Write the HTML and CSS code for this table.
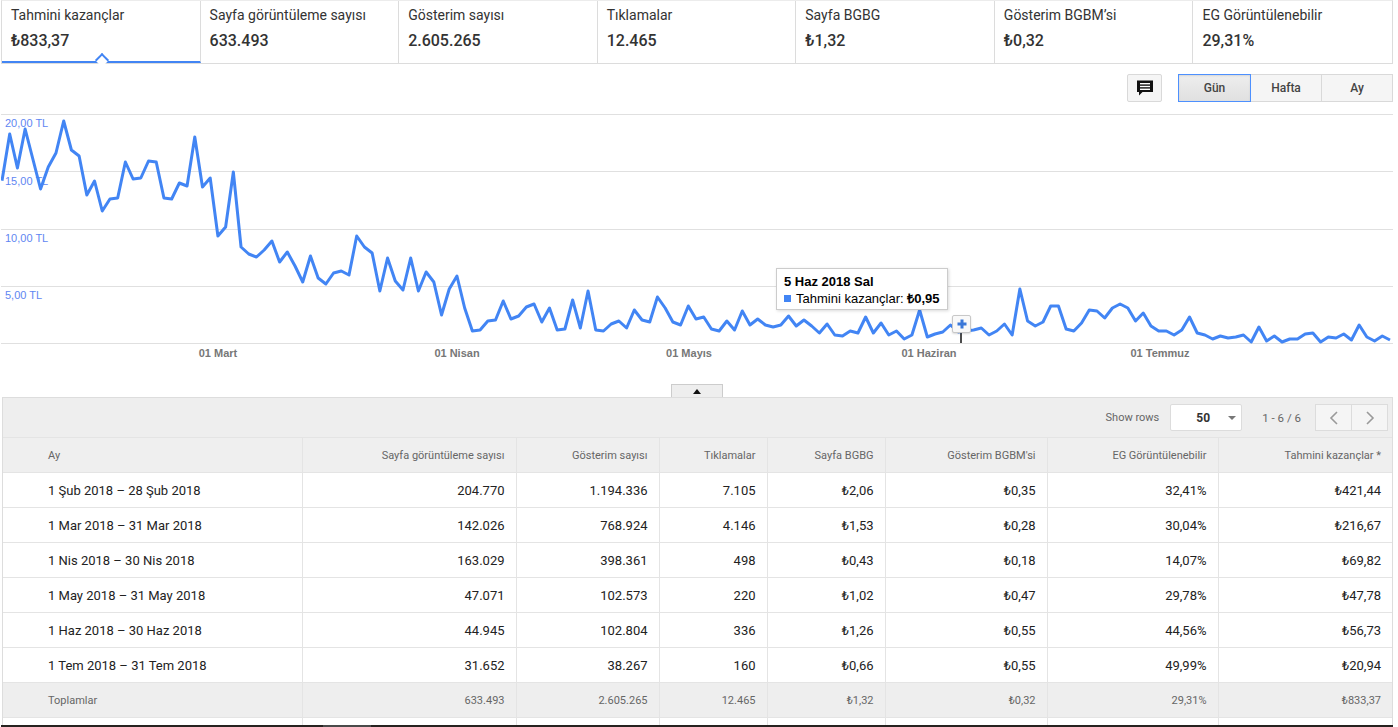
FILE: index.html
```html
<!DOCTYPE html>
<html lang="tr">
<head>
<meta charset="utf-8">
<title>Tahmini kazançlar</title>
<link rel="stylesheet" href="styles.css">
</head>
<body>
<div class="page">
  <div class="metrics">
    <div class="metric active"><div class="m-label">Tahmini kazançlar</div><div class="m-value">₺833,37</div></div>
    <div class="metric"><div class="m-label">Sayfa görüntüleme sayısı</div><div class="m-value">633.493</div></div>
    <div class="metric"><div class="m-label">Gösterim sayısı</div><div class="m-value">2.605.265</div></div>
    <div class="metric"><div class="m-label">Tıklamalar</div><div class="m-value">12.465</div></div>
    <div class="metric"><div class="m-label">Sayfa BGBG</div><div class="m-value">₺1,32</div></div>
    <div class="metric"><div class="m-label">Gösterim BGBM’si</div><div class="m-value">₺0,32</div></div>
    <div class="metric"><div class="m-label">EG Görüntülenebilir</div><div class="m-value">29,31%</div></div>
  </div>

  <div class="toolbar">
    <button class="icon-btn" type="button">
      <svg width="18" height="18" viewBox="0 0 18 18"><path d="M1 1.5h16v11.5H6.5L3 16.5V13H1z" fill="#111"/><rect x="4" y="4" width="10" height="1.4" fill="#fff"/><rect x="4" y="6.8" width="10" height="1.4" fill="#fff"/><rect x="4" y="9.6" width="10" height="1.4" fill="#fff"/></svg>
    </button>
    <div class="seg">
      <button class="seg-btn on" type="button">Gün</button>
      <button class="seg-btn mid" type="button">Hafta</button>
      <button class="seg-btn last" type="button">Ay</button>
    </div>
  </div>

  <div class="chart">
    <svg class="chart-svg" width="1392" height="262" viewBox="0 108 1392 262">
      <g stroke="#e0e0e0" stroke-width="1">
        <line x1="0" y1="114.5" x2="1392" y2="114.5"/>
        <line x1="0" y1="171.5" x2="1392" y2="171.5"/>
        <line x1="0" y1="229.5" x2="1392" y2="229.5"/>
        <line x1="0" y1="286.5" x2="1392" y2="286.5"/>
        <line x1="0" y1="343.5" x2="1392" y2="343.5"/>
      </g>
      <g class="ylab">
        <text x="4" y="127">20,00 TL</text>
        <text x="4" y="185">15,00 TL</text>
        <text x="4" y="242">10,00 TL</text>
        <text x="4" y="299">5,00 TL</text>
      </g>
      <g class="xlab" text-anchor="middle">
        <text x="217" y="357">01 Mart</text>
        <text x="456" y="357">01 Nisan</text>
        <text x="688" y="357">01 Mayıs</text>
        <text x="928" y="357">01 Haziran</text>
        <text x="1159" y="357">01 Temmuz</text>
      </g>
      <line x1="960" y1="333" x2="960" y2="343" stroke="#111" stroke-width="1.5"/>
      <svg x="1" y="108" width="1388" height="262" viewBox="0 108 180 262" preserveAspectRatio="none" overflow="visible">
        <polyline fill="none" stroke="#4285f4" stroke-width="3" stroke-linejoin="round" vector-effect="non-scaling-stroke"
          points="0,180.7 1,134 2,168 3,129 4,159 5,189 6,167 7,153 8,121 9,150 10,156 11,195 12,181 13,211 14,199 15,198 16,162 17,179 18,178 19,161 20,162 21,198 22,199 23,183 24,186 25,137 26,187 27,178 28,236 29,227 30,172 31,247 32,254 33,257 34,250 35,241 36,262 37,252 38,266 39,282 40,256 41,278 42,284 43,273 44,271 45,275 46,236 47,247 48,253 49,291 50,258 51,281 52,290 53,258 54,291 55,272 56,282 57,315 58,289 59,276 60,308 61,331 62,330 63,321 64,320 65,301 66,319 67,316 68,307 69,304 70,322 71,308 72,330 73,329 74,300 75,328 76,291 77,330 78,331 79,324 80,321 81,328 82,310 83,320 84,322 85,297 86,308 87,322 88,325 89,306 90,319 91,317 92,329 93,331 94,321 95,330 96,311 97,325 98,319 99,325 100,327 101,325 102,316 103,326 104,320 105,326 106,333 107,324 108,335 109,336 110,331 111,333 112,317 113,333 114,323 115,335 116,331 117,339 118,335 119,310 120,337 121,334 122,332 123,325 124,332 125,331 126,330 127,328 128,335 129,331 130,324 131,335 132,289 133,321 134,326 135,322 136,306 137,306 138,329 139,331 140,323 141,310 142,311 143,318 144,308 145,304 146,308 147,321 148,313 149,326 150,331 151,331 152,335 153,330 154,317 155,333 156,335 157,339 158,336 159,338 160,337 161,335 162,342 163,327 164,341 165,336 166,342 167,339 168,339 169,334 170,333 171,342 172,337 173,338 174,334 175,340 176,325 177,337 178,341 179,336 180,340"/>
      </svg>
    </svg>
    <div class="tooltip">
      <div class="tt-title">5 Haz 2018 Sal</div>
      <div class="tt-row"><span class="tt-sw"></span>Tahmini kazançlar: <b>₺0,95</b></div>
    </div>
    <div class="marker">
      <svg width="10" height="10" viewBox="0 0 10 10"><path d="M5 0.5v9M0.5 5h9" stroke="#3b78d8" stroke-width="3"/></svg>
    </div>
  </div>

  <div class="collapse"><span class="tri"></span></div>

  <div class="panel">
    <div class="panel-bar">
      <span class="pb-text">Show rows</span>
      <div class="select"><span class="sel-val">50</span><span class="caret"></span></div>
      <span class="pb-text range">1 - 6 / 6</span>
      <div class="pager">
        <button class="pg-btn" type="button"><svg width="10" height="14" viewBox="0 0 10 14"><polyline points="8,1 2,7 8,13" fill="none" stroke="#9a9a9a" stroke-width="1.6"/></svg></button>
        <button class="pg-btn" type="button"><svg width="10" height="14" viewBox="0 0 10 14"><polyline points="2,1 8,7 2,13" fill="none" stroke="#9a9a9a" stroke-width="1.6"/></svg></button>
      </div>
    </div>
    <table class="grid">
      <colgroup>
        <col class="c1"><col class="c2"><col class="c3"><col class="c4"><col class="c5"><col class="c6"><col class="c7"><col class="c8">
      </colgroup>
      <thead>
        <tr><th class="first">Ay</th><th>Sayfa görüntüleme sayısı</th><th>Gösterim sayısı</th><th>Tıklamalar</th><th>Sayfa BGBG</th><th>Gösterim BGBM'si</th><th>EG Görüntülenebilir</th><th>Tahmini kazançlar *</th></tr>
      </thead>
      <tbody>
        <tr><td class="first">1 Şub 2018 – 28 Şub 2018</td><td>204.770</td><td>1.194.336</td><td>7.105</td><td>₺2,06</td><td>₺0,35</td><td>32,41%</td><td>₺421,44</td></tr>
        <tr><td class="first">1 Mar 2018 – 31 Mar 2018</td><td>142.026</td><td>768.924</td><td>4.146</td><td>₺1,53</td><td>₺0,28</td><td>30,04%</td><td>₺216,67</td></tr>
        <tr><td class="first">1 Nis 2018 – 30 Nis 2018</td><td>163.029</td><td>398.361</td><td>498</td><td>₺0,43</td><td>₺0,18</td><td>14,07%</td><td>₺69,82</td></tr>
        <tr><td class="first">1 May 2018 – 31 May 2018</td><td>47.071</td><td>102.573</td><td>220</td><td>₺1,02</td><td>₺0,47</td><td>29,78%</td><td>₺47,78</td></tr>
        <tr><td class="first">1 Haz 2018 – 30 Haz 2018</td><td>44.945</td><td>102.804</td><td>336</td><td>₺1,26</td><td>₺0,55</td><td>44,56%</td><td>₺56,73</td></tr>
        <tr><td class="first">1 Tem 2018 – 31 Tem 2018</td><td>31.652</td><td>38.267</td><td>160</td><td>₺0,66</td><td>₺0,55</td><td>49,99%</td><td>₺20,94</td></tr>
        <tr class="totals"><td class="first">Toplamlar</td><td>633.493</td><td>2.605.265</td><td>12.465</td><td>₺1,32</td><td>₺0,32</td><td>29,31%</td><td>₺833,37</td></tr>
        <tr class="spacer"><td></td><td></td><td></td><td></td><td></td><td></td><td></td><td></td></tr>
      </tbody>
    </table>
  </div>
  <div class="hscroll"><div class="thumb"></div></div>
</div>
</body>
</html>
```

FILE: styles.css
```css
* { box-sizing: border-box; }

body {
  margin: 0;
  background: #fff;
  color: #333;
  font-family: Roboto, "Liberation Sans", Arial, sans-serif;
  overflow: hidden;
}

.page {
  width: 1392px;
  margin-left: 1px;
}

/* metric tabs */
.metrics {
  display: grid;
  grid-template-columns: repeat(7, 1fr);
  height: 64px;
  border: 1px solid #dcdcdc;
  border-top-color: #ececec;
}

.metric {
  position: relative;
  padding: 4px 8px 0 9px;
  border-right: 1px solid #dcdcdc;
}
.metric:last-child { border-right: none; }

.m-label {
  font-size: 14px;
  line-height: 20px;
  color: #333;
}

.m-value {
  margin-top: 5px;
  font-size: 16px;
  line-height: 22px;
  font-weight: 500;
  color: #333;
}

.metric.active {
  border-bottom: 2px solid #4285f4;
}
.metric.active::after {
  content: "";
  position: absolute;
  left: 95px;
  bottom: -4px;
  width: 8px;
  height: 8px;
  background: #fff;
  border-top: 2px solid #4285f4;
  border-left: 2px solid #4285f4;
  transform: rotate(45deg);
}

/* toolbar */
.toolbar {
  display: flex;
  justify-content: flex-end;
  align-items: center;
  gap: 16px;
  margin-top: 10px;
  height: 28px;
}

.icon-btn {
  width: 35px;
  height: 28px;
  padding: 0;
  border: 1px solid #d9d9d9;
  border-radius: 2px;
  background: #f5f5f5;
  display: flex;
  align-items: center;
  justify-content: center;
}

.seg { display: flex; }

.seg-btn {
  width: 72px;
  height: 28px;
  padding: 0;
  border: 1px solid #d9d9d9;
  background: #f5f5f5;
  color: #444;
  font-family: Roboto, "Liberation Sans", Arial, sans-serif;
  font-size: 12px;
  font-weight: 500;
  margin-left: -1px;
}
.seg-btn:first-child { margin-left: 0; width: 73px; }
.seg-btn.last { width: 72px; }
.seg-btn.on {
  position: relative;
  z-index: 1;
  background: linear-gradient(#eeeeee, #e0e0e0);
  border-color: #4d90fe;
  box-shadow: inset 0 1px 2px rgba(0, 0, 0, 0.1);
}

/* chart */
.chart {
  position: relative;
  height: 262px;
  margin-top: 6px;
}

.chart-svg { display: block; }

.ylab text {
  font-family: "Liberation Sans", Arial, sans-serif;
  font-size: 11px;
  fill: #5f86f2;
}

.xlab text {
  font-family: "Liberation Sans", Arial, sans-serif;
  font-size: 11px;
  font-weight: bold;
  fill: #777;
}

.tooltip {
  position: absolute;
  left: 775px;
  top: 160px;
  width: 172px;
  height: 42px;
  padding: 4px 0 0 7px;
  background: #fff;
  border: 1px solid #ccc;
  box-shadow: 1px 1px 3px rgba(0, 0, 0, 0.15);
  font-family: "Liberation Sans", Arial, sans-serif;
  font-size: 13px;
  color: #000;
}

.tt-title {
  font-weight: bold;
  line-height: 17px;
}

.tt-row {
  display: flex;
  align-items: center;
  line-height: 17px;
  white-space: pre;
}
.tt-row b { font-weight: bold; }

.tt-sw {
  width: 7px;
  height: 7px;
  margin-right: 5px;
  background: #4285f4;
}

.marker {
  position: absolute;
  left: 951px;
  top: 207px;
  width: 19px;
  height: 18px;
  display: flex;
  align-items: center;
  justify-content: center;
  background: #f9f9f9;
  border: 1px solid #c8c8c8;
  border-radius: 2px;
  box-shadow: 0 1px 2px rgba(0, 0, 0, 0.15);
}

/* collapse tab */
.collapse {
  width: 52px;
  height: 13px;
  margin: 14px 0 0 670px;
  background: #eee;
  border: 1px solid #ccc;
  border-bottom: none;
  display: flex;
  justify-content: center;
  align-items: center;
}
.tri {
  width: 0;
  height: 0;
  border-left: 4px solid transparent;
  border-right: 4px solid transparent;
  border-bottom: 5px solid #111;
}

/* table panel */
.panel {
  margin-left: 1px;
  border: 1px solid #ddd;
  border-bottom: none;
  background: #eee;
}

.panel-bar {
  display: flex;
  justify-content: flex-end;
  align-items: center;
  height: 39px;
  padding-right: 4px;
}

.pb-text {
  font-size: 11px;
  color: #666;
}
.pb-text.range { margin: 0 14px 0 20px; font-size: 11.5px; }

.select {
  display: flex;
  align-items: center;
  width: 72px;
  height: 27px;
  margin-left: 11px;
  background: #fff;
  border: 1px solid #dcdcdc;
  border-radius: 2px;
  padding-left: 25px;
}
.sel-val {
  font-size: 12px;
  font-weight: bold;
  color: #333;
  width: 32px;
}
.caret {
  width: 0;
  height: 0;
  border-left: 4px solid transparent;
  border-right: 4px solid transparent;
  border-top: 4px solid #777;
}

.pager { display: flex; }
.pg-btn {
  width: 37px;
  height: 27px;
  padding: 0;
  background: #f5f5f5;
  border: 1px solid #dcdcdc;
  display: flex;
  align-items: center;
  justify-content: center;
}
.pg-btn + .pg-btn { margin-left: -1px; }

.grid {
  width: 100%;
  border-collapse: collapse;
  table-layout: fixed;
}
.c1 { width: 299px; }
.c2 { width: 214px; }
.c3 { width: 143px; }
.c4 { width: 108px; }
.c5 { width: 118px; }
.c6 { width: 162px; }
.c7 { width: 171px; }
.c8 { width: auto; }

.grid th,
.grid td {
  height: 35px;
  padding: 0 11px 0 0;
  text-align: right;
  border-left: 1px solid #e4e4e4;
  border-top: 1px solid #e4e4e4;
  white-space: nowrap;
}
.grid th:first-child,
.grid td:first-child { border-left: none; }

.grid th {
  background: #efefef;
  font-size: 11px;
  font-weight: normal;
  color: #666;
}

.grid td {
  background: #fff;
  font-size: 13px;
  color: #222;
}

.grid .first {
  text-align: left;
  padding-left: 45px;
}

.grid tr.totals td {
  background: #eee;
  font-size: 11px;
  color: #666;
}

.grid tr.spacer td {
  height: 7px;
  background: #fff;
}

.hscroll {
  height: 6px;
  background: #26221f;
  padding-left: 322px;
}
.thumb {
  width: 48px;
  height: 6px;
  background: #4a4a4a;
}
```
